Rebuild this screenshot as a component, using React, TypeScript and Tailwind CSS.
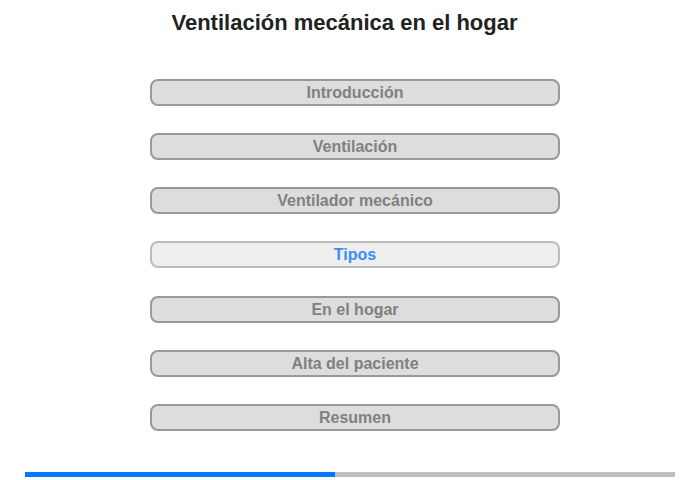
const items = [
  "Introducción",
  "Ventilación",
  "Ventilador mecánico",
  "Tipos",
  "En el hogar",
  "Alta del paciente",
  "Resumen",
];

const active = 3;

export default function App() {
  return (
    <div
      className="w-[700px] h-[480px] bg-white relative overflow-hidden"
      style={{ fontFamily: "Arial, 'Liberation Sans', sans-serif" }}
    >
      <h1 className="pt-[9px] text-center text-[22px] leading-[28px] font-bold text-[#222] pr-[11px]">
        Ventilación mecánica en el hogar
      </h1>

      <div className="mt-[42px] ml-[150px] w-[410px] flex flex-col gap-[27px]">
        {items.map((label, i) => (
          <div
            key={label}
            className={
              i === active
                ? "h-[27px] rounded-[8px] border-2 border-[#bbb] bg-[#eee] flex items-center justify-center text-[16px] font-bold text-[#3b8cff]"
                : i === active + 1
                  ? "mt-[1px] h-[27px] rounded-[8px] border-2 border-[#999] bg-[#ddd] flex items-center justify-center text-[16px] font-bold text-[#808080]"
                  : "h-[27px] rounded-[8px] border-2 border-[#999] bg-[#ddd] flex items-center justify-center text-[16px] font-bold text-[#808080]"
            }
          >
            {label}
          </div>
        ))}
      </div>

      {/* progress */}
      <div className="absolute left-[25px] top-[472px] w-[650px] h-[5px] bg-[#c0c0c0] flex">
        <div className="w-[310px] h-full bg-[#0078ff]" />
      </div>
    </div>
  );
}
